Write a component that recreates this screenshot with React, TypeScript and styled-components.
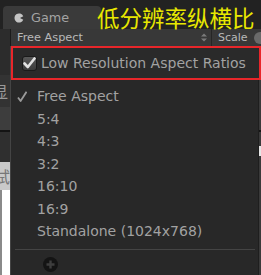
import React from 'react';
import styled, { createGlobalStyle } from 'styled-components';

const GlobalStyle = createGlobalStyle`
  html, body {
    margin: 0;
    padding: 0;
    background: #232323;
  }
  body {
    width: 261px;
    height: 275px;
    overflow: hidden;
    font-family: "DejaVu Sans", "Liberation Sans", sans-serif;
  }
`;

const Frame = styled.div`
  position: relative;
  width: 261px;
  height: 275px;
  display: flex;
  flex-direction: column;
  overflow: hidden;
`;

const TabBar = styled.div`
  height: 29px;
  display: flex;
  align-items: flex-end;
  padding-left: 3px;
  background: #222222;
  box-sizing: border-box;
`;

const Tab = styled.div`
  width: 98px;
  height: 23px;
  box-sizing: border-box;
  display: flex;
  align-items: center;
  gap: 7px;
  padding-left: 11px;
  background: #3a3a3a;
  border-radius: 4px 4px 0 0;
  color: #a4a4a4;
  font-size: 12.8px;
`;

/* yellow annotation written over the screenshot */
const Caption = styled.div`
  position: absolute;
  left: 97px;
  top: 6px;
  font-family: "Noto Sans CJK SC", sans-serif;
  font-size: 22.5px;
  line-height: 23px;
  color: #e8e800;
  white-space: nowrap;
`;

const Toolbar = styled.div`
  height: 17px;
  display: flex;
  background: #383838;
  font-size: 11.3px;
  color: #b8b8b8;
`;

const ToolbarGap = styled.div`
  width: 10px;
  background: #2c2c2c;
  border-right: 1px solid #1b1b1b;
`;

const AspectPicker = styled.div`
  width: 200px;
  display: flex;
  align-items: center;
  justify-content: space-between;
  padding: 0 4px 0 6px;
  box-sizing: border-box;
`;

const Divider = styled.div`
  width: 1px;
  background: #262626;
`;

const ScaleGroup = styled.div`
  flex: 1;
  display: flex;
  align-items: center;
  gap: 6px;
  padding-left: 6px;
  overflow: hidden;
  font-size: 11px;
`;

const Knob = styled.div`
  flex: none;
  width: 12px;
  height: 12px;
  border-radius: 50%;
  background: #6a6a6a;
`;

const Body = styled.div`
  flex: 1;
  display: flex;
  min-height: 0;
`;

const Strip = styled.div<{ $w: number }>`
  width: ${(p) => p.$w}px;
  display: flex;
  flex-direction: column;
  overflow: hidden;
`;

const Band = styled.div<{ $h: number; $bg: string; $fg?: string; $edge?: string }>`
  height: ${(p) => p.$h}px;
  flex: ${(p) => (p.$h === 0 ? 1 : 'none')};
  background: ${(p) => p.$bg};
  color: ${(p) => p.$fg || '#888'};
  border-left: ${(p) => (p.$edge ? `2px solid ${p.$edge}` : 'none')};
  font-family: "Noto Sans CJK SC", sans-serif;
  font-size: 16px;
  line-height: ${(p) => p.$h}px;
  white-space: nowrap;
  overflow: hidden;
`;

const Clip = styled.span<{ $shift: number }>`
  display: inline-block;
  margin-left: ${(p) => p.$shift}px;
`;

const Menu = styled.div`
  flex: 1;
  display: flex;
  flex-direction: column;
  background: #282828;
  border-left: 1px solid #444444;
  border-right: 1px solid #1e1e1e;
`;

const Highlight = styled.div`
  position: relative;
  z-index: 1;
  height: 34px;
  margin-right: -3px;
  box-sizing: border-box;
  border: 2px solid #e8262a;
  display: flex;
  align-items: center;
  gap: 4px;
  padding-left: 9px;
  background: #2a2a2a;
  color: #a2a2a2;
  font-size: 14px;
`;

const CheckBox = styled.div`
  width: 15px;
  height: 15px;
  box-sizing: border-box;
  border-radius: 3px;
  border: 1px solid #1a1a1a;
  background: linear-gradient(#585858, #3c3c3c);
  display: flex;
  align-items: center;
  justify-content: center;
`;

const List = styled.div`
  padding-top: 5px;
`;

const Item = styled.div`
  height: 22.5px;
  display: flex;
  align-items: center;
  padding-left: 6px;
  color: #a2a2a2;
  font-size: 14px;
  white-space: nowrap;
`;

const CheckSlot = styled.div`
  width: 20px;
  display: flex;
  align-items: center;
`;

const Separator = styled.div`
  height: 1px;
  background: #444444;
  margin: 6px 3px 0 4px;
`;

const AddRow = styled.div`
  margin: 7px 0 0 32px;
  display: flex;
`;

const ratios = ['Free Aspect', '5:4', '4:3', '3:2', '16:10', '16:9', 'Standalone (1024x768)'];

const GameIcon = () => (
  <svg width="10" height="10" viewBox="0 0 10 10">
    <path d="M9.3 3.2 A4.6 4.6 0 1 0 9.3 6.8 L6 5 Z" fill="#c4c4c4" />
  </svg>
);

const App: React.FC = () => (
  <Frame>
    <GlobalStyle />
    <TabBar>
      <Tab>
        <GameIcon />
        Game
      </Tab>
    </TabBar>
    <Caption>低分辨率纵横比</Caption>
    <Toolbar>
      <ToolbarGap />
      <AspectPicker>
        Free Aspect
        <svg width="6" height="9" viewBox="0 0 6 9">
          <path d="M0 3.5 L3 0.5 L6 3.5 Z M0 5.5 L3 8.5 L6 5.5 Z" fill="#7a7a7a" />
        </svg>
      </AspectPicker>
      <Divider />
      <ScaleGroup>
        Scale
        <Knob />
      </ScaleGroup>
    </Toolbar>
    <Body>
      <Strip $w={10}>
        <Band $h={29} $bg="#2c2c2c" />
        <Band $h={32} $bg="#333333" $fg="#9a9a9a">
          <Clip $shift={-8}>显</Clip>
        </Band>
        <Band $h={23} $bg="#3d3d3d" />
        <Band $h={2} $bg="#141414" />
        <Band $h={30} $bg="#2f2f2f" />
        <Band $h={28} $bg="#c9c9c9" $fg="#777">
          <Clip $shift={-6}>试</Clip>
        </Band>
        <Band $h={0} $bg="#ffffff" $edge="#8a8a8a" />
      </Strip>
      <Menu>
        <Highlight>
          <CheckBox>
            <svg width="13" height="12" viewBox="0 0 13 12">
              <path d="M1.5 6.5 L4.8 10 L11.5 1.5" fill="none" stroke="#e2e2e2" strokeWidth="2.6" strokeLinecap="round" strokeLinejoin="round" />
            </svg>
          </CheckBox>
          Low Resolution Aspect Ratios
        </Highlight>
        <List>
          {ratios.map((label, index) => (
            <Item key={label}>
              <CheckSlot>
                {index === 0 && (
                  <svg width="10" height="11" viewBox="0 0 10 11">
                    <path d="M1 6.5 L3.6 10 L9.5 0.8" fill="none" stroke="#9a9a9a" strokeWidth="1.8" strokeLinejoin="round" />
                  </svg>
                )}
              </CheckSlot>
              {label}
            </Item>
          ))}
        </List>
        <Separator />
        <AddRow>
          <svg width="15" height="15" viewBox="0 0 15 15">
            <circle cx="7.5" cy="7.5" r="7.5" fill="#141414" />
            <path d="M7.5 3.5 V11.5 M3.5 7.5 H11.5" stroke="#3e3e3e" strokeWidth="2.4" />
          </svg>
        </AddRow>
      </Menu>
      <Strip $w={2}>
        <Band $h={84} $bg="#3a3a3a" />
        <Band $h={2} $bg="#151515" />
        <Band $h={14} $bg="#3a3a3a" />
        <Band $h={10} $bg="#e6e6e6" />
        <Band $h={0} $bg="#3a3a3a" />
      </Strip>
    </Body>
  </Frame>
);

export default App;
